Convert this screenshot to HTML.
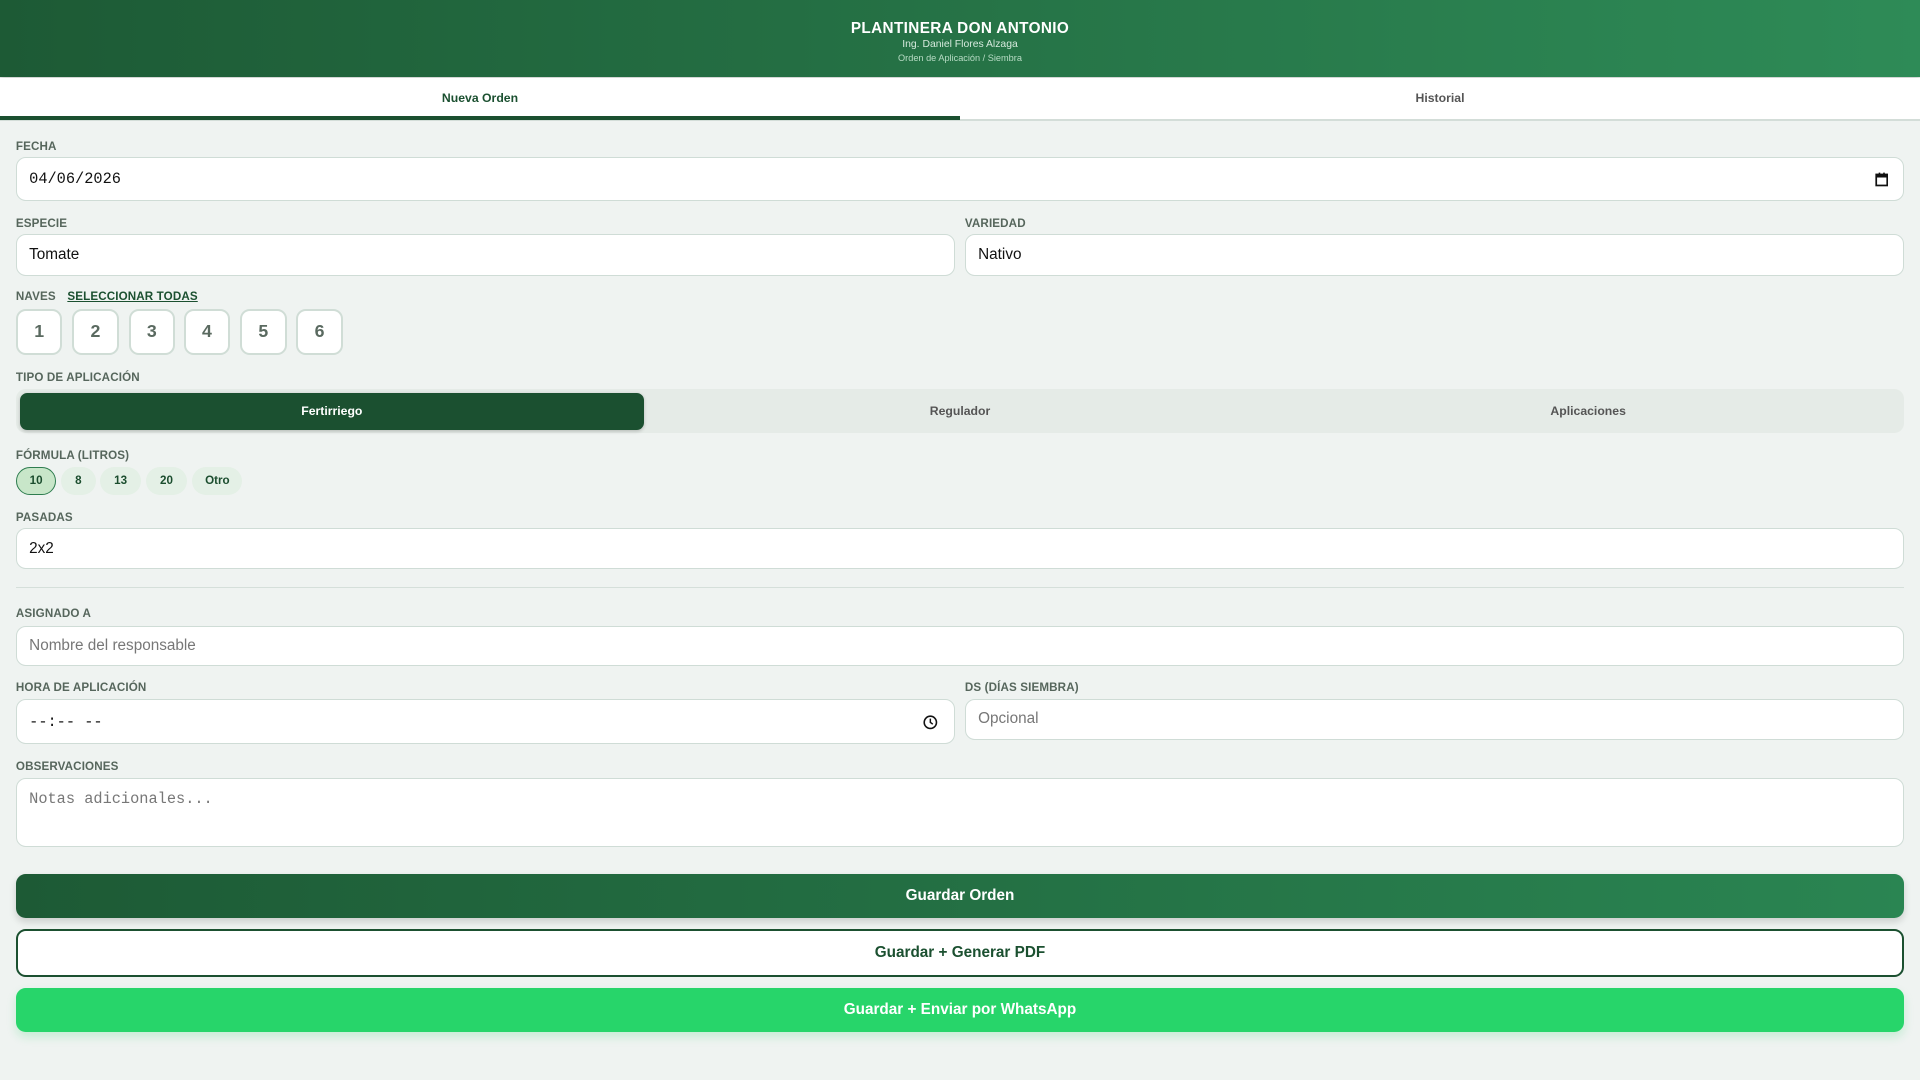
<!DOCTYPE html>
<html><head><meta charset="utf-8"><style>
html,body{margin:0;padding:0;}
body{width:1568px;height:882px;zoom:1.2244898;background:#eff3f1;font-family:"Liberation Sans",sans-serif;position:relative;overflow:hidden;}
.a{position:absolute;}
.hdr{left:0;top:0;width:1568px;height:63px;background:linear-gradient(90deg,#1d5a35,#2e8b57);box-shadow:0 2px 4px rgba(0,0,0,.15);}
.t{width:1568px;text-align:center;color:#fff;}
.tabs{left:0;top:64px;width:1568px;height:33px;background:#fff;border-bottom:2px solid #d3ddd8;}
.tab{top:74px;font-size:10px;font-weight:bold;width:784px;text-align:center;}
.lbl{font-size:9.5px;font-weight:bold;color:#56665c;letter-spacing:.1px;margin-top:1px;}
.in{background:#fff;border:1px solid #cfdcd6;border-radius:8px;box-sizing:border-box;font-size:12.5px;color:#111;padding-left:10px;display:flex;align-items:center;}
.ph{color:#777;}
.nv{width:38px;height:38px;top:252px;background:#fff;border:2px solid #d0ddd6;border-radius:8px;box-sizing:border-box;display:flex;align-items:center;justify-content:center;font-size:14.5px;font-weight:bold;color:#5a6a60;}
.pill{top:381px;height:23px;border-radius:12px;background:#e4f0e6;font-size:9.5px;font-weight:bold;color:#1b4d2e;display:flex;align-items:center;justify-content:center;box-sizing:border-box;}
.btn{left:13px;width:1542px;border-radius:8px;display:flex;align-items:center;justify-content:center;font-size:12.5px;font-weight:bold;box-sizing:border-box;}
</style></head><body>
<div class="a hdr"></div>
<div class="a t" style="top:16px;font-size:12.5px;font-weight:bold;letter-spacing:.3px;">PLANTINERA DON ANTONIO</div>
<div class="a t" style="top:32px;font-size:8.5px;color:#d6eadd;">Ing. Daniel Flores Alzaga</div>
<div class="a t" style="top:43px;font-size:7.5px;color:#b8dcc5;">Orden de Aplicación / Siembra</div>
<div class="a tabs"></div>
<div class="a" style="left:0;top:95px;width:784px;height:3px;background:#1b5030;"></div>
<div class="a tab" style="left:0;color:#1b5030;">Nueva Orden</div>
<div class="a tab" style="left:784px;color:#555;">Historial</div>

<div class="a lbl" style="left:13px;top:113px;">FECHA</div>
<div class="a in" style="left:13px;top:128px;width:1542px;height:36px;font-family:'Liberation Mono',monospace;font-size:12.5px;">04/06/2026
<svg style="position:absolute;right:12px;top:12px" width="11" height="12" viewBox="0 0 11 12"><rect x="1" y="2" width="9" height="9" fill="none" stroke="#111" stroke-width="1.4"/><rect x="1" y="2" width="9" height="2.5" fill="#111"/><rect x="3" y="0.5" width="1.3" height="2" fill="#111"/><rect x="6.7" y="0.5" width="1.3" height="2" fill="#111"/></svg></div>

<div class="a lbl" style="left:13px;top:176px;">ESPECIE</div>
<div class="a lbl" style="left:788px;top:176px;">VARIEDAD</div>
<div class="a in" style="left:13px;top:191px;width:767px;height:34px;">Tomate</div>
<div class="a in" style="left:788px;top:191px;width:767px;height:34px;">Nativo</div>

<div class="a lbl" style="left:13px;top:236px;">NAVES</div>
<div class="a lbl" style="left:55px;top:236px;color:#1b5030;text-decoration:underline;">SELECCIONAR TODAS</div>
<div class="a nv" style="left:13px;">1</div>
<div class="a nv" style="left:59px;">2</div>
<div class="a nv" style="left:105px;">3</div>
<div class="a nv" style="left:150px;">4</div>
<div class="a nv" style="left:196px;">5</div>
<div class="a nv" style="left:242px;">6</div>

<div class="a lbl" style="left:13px;top:302px;">TIPO DE APLICACIÓN</div>
<div class="a" style="left:13px;top:318px;width:1542px;height:36px;background:#e5ebe7;border-radius:8px;"></div>
<div class="a" style="left:16px;top:321px;width:510px;height:30px;background:#1b5030;border-radius:6px;box-shadow:0 1px 3px rgba(0,0,0,.2);color:#fff;font-size:10px;font-weight:bold;display:flex;align-items:center;justify-content:center;">Fertirriego</div>
<div class="a" style="left:529px;top:321px;width:510px;height:30px;color:#555;font-size:10px;font-weight:bold;display:flex;align-items:center;justify-content:center;">Regulador</div>
<div class="a" style="left:1042px;top:321px;width:510px;height:30px;color:#555;font-size:10px;font-weight:bold;display:flex;align-items:center;justify-content:center;">Aplicaciones</div>

<div class="a lbl" style="left:13px;top:366px;">FÓRMULA (LITROS)</div>
<div class="a pill" style="left:13px;width:33px;background:#c8e6c9;border:1px solid #2e7d4f;">10</div>
<div class="a pill" style="left:50px;width:28px;">8</div>
<div class="a pill" style="left:82px;width:33px;">13</div>
<div class="a pill" style="left:119px;width:34px;">20</div>
<div class="a pill" style="left:157px;width:41px;">Otro</div>

<div class="a lbl" style="left:13px;top:416px;">PASADAS</div>
<div class="a in" style="left:13px;top:431px;width:1542px;height:34px;">2x2</div>
<div class="a" style="left:13px;top:479px;width:1542px;height:1px;background:#d5dfda;"></div>

<div class="a lbl" style="left:13px;top:495px;">ASIGNADO A</div>
<div class="a in" style="left:13px;top:511px;width:1542px;height:33px;"><span class="ph">Nombre del responsable</span></div>

<div class="a lbl" style="left:13px;top:555px;">HORA DE APLICACIÓN</div>
<div class="a lbl" style="left:788px;top:555px;">DS (DÍAS SIEMBRA)</div>
<div class="a in" style="left:13px;top:571px;width:767px;height:37px;font-family:'Liberation Mono',monospace;font-size:12.5px;">--:-- --
<svg style="position:absolute;right:13px;top:12px" width="12" height="12" viewBox="0 0 12 12"><circle cx="6" cy="6" r="5" fill="none" stroke="#111" stroke-width="1.3"/><path d="M6 3v3l2 1.5" fill="none" stroke="#111" stroke-width="1.2"/></svg></div>
<div class="a in" style="left:788px;top:571px;width:767px;height:33px;"><span class="ph">Opcional</span></div>

<div class="a lbl" style="left:13px;top:620px;">OBSERVACIONES</div>
<div class="a in" style="left:13px;top:635px;width:1542px;height:57px;align-items:flex-start;padding-top:9px;font-family:'Liberation Mono',monospace;font-size:12.5px;"><span class="ph">Notas adicionales...</span></div>

<div class="a btn" style="top:714px;height:36px;background:linear-gradient(90deg,#1d5a35,#2a8552);color:#fff;box-shadow:0 3px 6px rgba(0,0,0,.15);">Guardar Orden</div>
<div class="a btn" style="top:759px;height:39px;background:#fff;border:2px solid #1b5030;color:#1b5030;">Guardar + Generar PDF</div>
<div class="a btn" style="top:807px;height:36px;background:#27d56a;color:#fff;box-shadow:0 4px 8px rgba(37,211,102,.2);">Guardar + Enviar por WhatsApp</div>
</body></html>
